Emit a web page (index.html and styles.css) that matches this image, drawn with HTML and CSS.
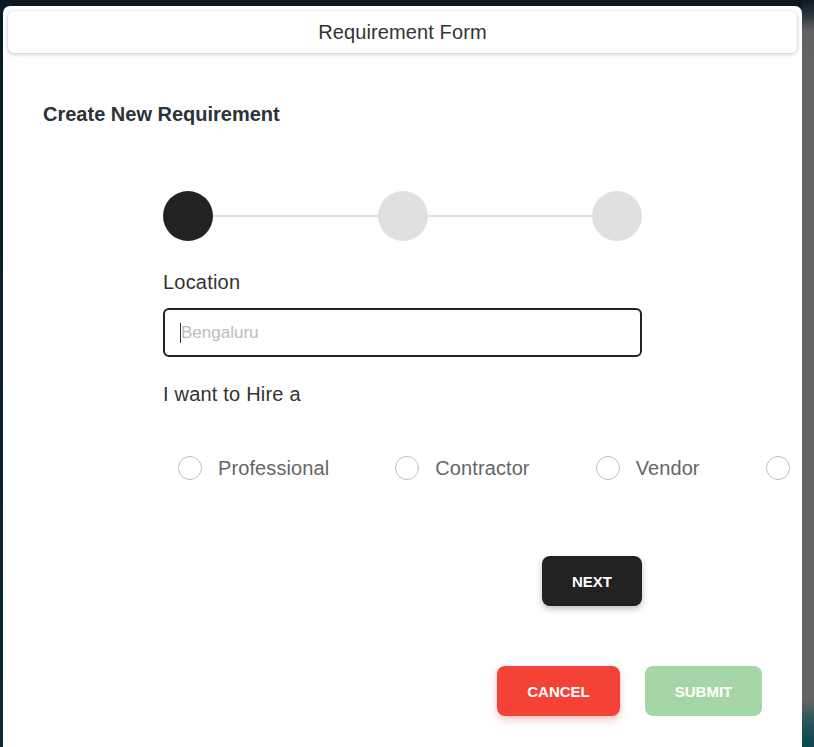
FILE: index.html
```html
<!DOCTYPE html>
<html lang="en">
<head>
<meta charset="utf-8">
<title>Requirement Form</title>
<link rel="stylesheet" href="styles.css">
</head>
<body>
<div class="modal">
  <div class="modal-header">Requirement Form</div>
  <h2 class="heading">Create New Requirement</h2>
  <div class="content">
    <div class="stepper">
      <span class="step step-active"></span>
      <span class="step-line"></span>
      <span class="step"></span>
      <span class="step-line"></span>
      <span class="step"></span>
    </div>
    <label class="field-label" for="loc">Location</label>
    <div class="input-box"><span class="caret"></span><input id="loc" class="input" type="text" placeholder="Bengaluru"></div>
    <div class="field-label hire-label">I want to Hire a</div>
    <div class="radio-row">
      <div class="radio-item"><span class="radio"></span><span class="radio-text">Professional</span></div>
      <div class="radio-item"><span class="radio"></span><span class="radio-text">Contractor</span></div>
      <div class="radio-item"><span class="radio"></span><span class="radio-text">Vendor</span></div>
      <div class="radio-item"><span class="radio"></span></div>
    </div>
    <div class="next-row">
      <button class="btn btn-next" type="button">NEXT</button>
    </div>
  </div>
  <div class="actions">
    <button class="btn btn-cancel" type="button">CANCEL</button>
    <button class="btn btn-submit" type="button">SUBMIT</button>
  </div>
</div>
</body>
</html>
```
FILE: styles.css
```css
html, body {
  margin: 0;
  padding: 0;
  height: 100%;
  overflow: hidden;
}
body {
  font-family: "Liberation Sans", Arial, sans-serif;
  background:
    linear-gradient(to bottom, #0c1d25 0, #27333a 14px, #5f6162 30px, #646464 60px, #646464 700px, #1f5459 725px, #0b474e 747px) right top / 12px 100% no-repeat,
    linear-gradient(to bottom, #0b1a22, #0b2a32);
}
.modal {
  margin: 6px 0 0 3px;
  width: 799px;
  height: 760px;
  background: #fff;
  border-radius: 7px 7px 0 0;
  overflow: hidden;
  box-sizing: border-box;
}
.modal-header {
  margin: 5px 5px 0 5px;
  height: 42px;
  background: #fff;
  border-radius: 6px;
  box-shadow: 0 1px 4px rgba(0, 0, 0, 0.22), 0 0 0 1px rgba(0, 0, 0, 0.02);
  display: flex;
  align-items: center;
  justify-content: center;
  font-size: 20px;
  letter-spacing: 0.1px;
  color: #333;
}
.heading {
  margin: 49px 0 0 40px;
  font-size: 20px;
  line-height: 24px;
  font-weight: bold;
  color: #2b3338;
}
.content {
  margin: 65px 0 0 160px;
  width: 479px;
}
.stepper {
  display: flex;
  align-items: center;
  height: 50px;
}
.step {
  width: 50px;
  height: 50px;
  border-radius: 50%;
  background: #e0e0e0;
  flex: none;
}
.step-active {
  background: #222;
}
.step-line {
  flex: 1;
  height: 2px;
  background: #e0e0e0;
}
.field-label {
  display: block;
  margin-top: 29px;
  font-size: 20px;
  line-height: 24px;
  letter-spacing: 0.2px;
  color: #333;
}
.input-box {
  margin-top: 14px;
  height: 49px;
  box-sizing: border-box;
  border: 2px solid #222;
  border-radius: 6px;
  display: flex;
  align-items: center;
  padding-left: 15px;
}
.caret {
  width: 1px;
  height: 20px;
  background: #333;
  flex: none;
}
.input {
  border: none;
  outline: none;
  padding: 0;
  margin: 0;
  flex: 1;
  font-family: "Liberation Sans", Arial, sans-serif;
  font-size: 17px;
  color: #333;
  background: transparent;
}
.input::placeholder {
  color: #bdbdbd;
}
.hire-label {
  margin-top: 25px;
}
.radio-row {
  margin-top: 50px;
  margin-left: 15px;
  display: flex;
  align-items: center;
  gap: 66px;
  white-space: nowrap;
}
.radio-item {
  display: flex;
  align-items: center;
  gap: 16px;
  flex: none;
}
.radio {
  width: 24px;
  height: 24px;
  box-sizing: border-box;
  border: 1px solid #b6c3cb;
  border-radius: 50%;
  flex: none;
}
.radio-text {
  font-size: 20px;
  letter-spacing: 0.1px;
  color: #666;
}
.next-row {
  margin-top: 76px;
  display: flex;
  justify-content: flex-end;
}
.btn {
  height: 50px;
  border: none;
  border-radius: 8px;
  font-family: "Liberation Sans", Arial, sans-serif;
  font-size: 15px;
  font-weight: bold;
  color: #fff;
  cursor: pointer;
  padding: 0;
}
.btn-next {
  width: 100px;
  background: #222;
  box-shadow: 0 3px 6px rgba(0, 0, 0, 0.25);
}
.actions {
  margin: 60px 40px 0 0;
  display: flex;
  justify-content: flex-end;
  gap: 25px;
}
.btn-cancel {
  width: 123px;
  background: #f44336;
  box-shadow: 0 4px 8px rgba(244, 67, 54, 0.3);
}
.btn-submit {
  width: 117px;
  background: #a5d6a7;
}
```
